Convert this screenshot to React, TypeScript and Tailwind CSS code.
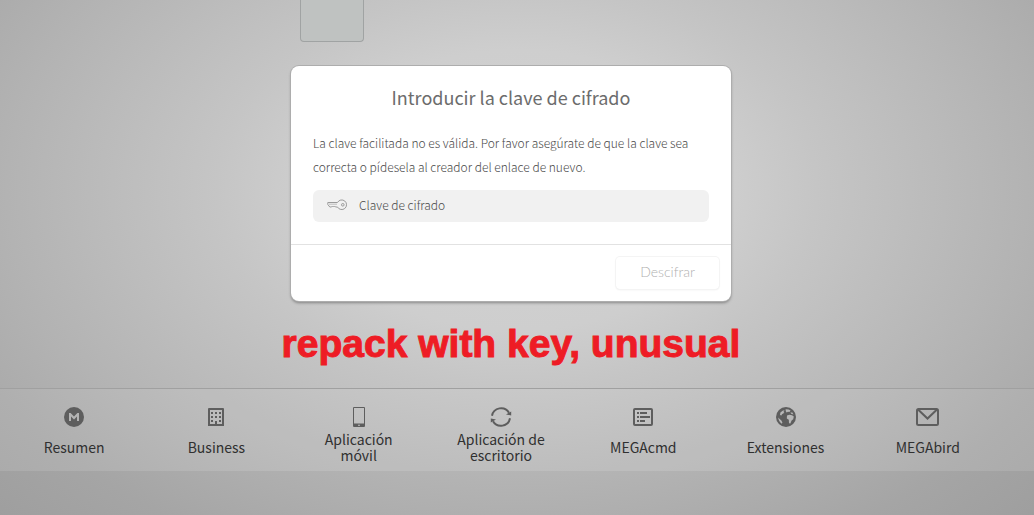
import type { ReactNode } from "react";

function Glyph({ w, h = 20, children }: { w: number; h?: number; children: ReactNode }) {
  return (
    <svg width={w} height={h} viewBox={`0 0 ${w} ${h}`} fill="none" aria-hidden="true">
      {children}
    </svg>
  );
}

const ink = "#5e5e5e";

const icons = {
  mega: (
    <Glyph w={20}>
      <circle cx="10" cy="10" r="10" fill={ink} />
      <path d="M5 14V6h1.6L10 9.6 13.4 6H15v8h-2V9.4l-3 3-3-3V14z" fill="#b4b4b4" />
    </Glyph>
  ),
  building: (
    <Glyph w={16}>
      <path
        fillRule="evenodd"
        fill={ink}
        d="M1 1h14a1 1 0 0 1 1 1v17H0V2a1 1 0 0 1 1-1zM2 3v14h5v-3h2v3h5V3zM3 5h2v2H3zm4 0h2v2H7zm4 0h2v2h-2zM3 9h2v2H3zm4 0h2v2H7zm4 0h2v2h-2zM3 13h2v2H3zm8 0h2v2h-2z"
      />
    </Glyph>
  ),
  phone: (
    <Glyph w={12}>
      <path
        fillRule="evenodd"
        fill={ink}
        d="M1 0h10a1 1 0 0 1 1 1v18a1 1 0 0 1-1 1H1a1 1 0 0 1-1-1V1a1 1 0 0 1 1-1zM1 1v15.5h10V1zM5 17.7v1h2v-1z"
      />
    </Glyph>
  ),
  sync: (
    <Glyph w={22}>
      <path d="M2 8.8A9.2 9.2 0 0 1 19 5.8M20 11.2A9.2 9.2 0 0 1 3 14.2" stroke={ink} strokeWidth="2" />
      <path d="M21.2 4.4V8.6L16 7.4zM.8 15.6V11.4L6 12.6z" fill={ink} />
    </Glyph>
  ),
  list: (
    <Glyph w={20}>
      <rect x="1" y="2" width="18" height="16" rx="1" stroke={ink} strokeWidth="2" />
      <path d="M4 6h2M7 6h7M4 10h2M7 10h10M4 14h2M7 14h5" stroke={ink} strokeWidth="2" />
    </Glyph>
  ),
  globe: (
    <Glyph w={20}>
      <circle cx="10" cy="10" r="10" fill={ink} />
      <path
        fill="#b8b8b8"
        d="M4.4 5.6 7 3.4l1.6.2L7.4 5l1 .8L6 7.2l-.6 1.4L4 8zM9.6 2.2 12.6 2.4 14.6 3.6 13.4 5 12 4.8 10.6 5.6 9.8 4.2zM11 8.6 13.4 7.8 16 8.2 17.8 9.4 17.2 12.2 15.6 13.4 14.4 16.4 13 16.2 12.8 12.8 10.8 11.6zM14.4 5.4 16.4 5.6 17.4 7.4 15.2 6.8zM2.2 10.6 3.4 11.8 5.4 13.4 6.4 15.4 5.8 16.8A8.4 8.4 0 0 1 2.2 10.6z"
      />
    </Glyph>
  ),
  mail: (
    <Glyph w={23}>
      <rect x="1" y="2" width="21" height="16" rx="1.5" stroke={ink} strokeWidth="2" />
      <path d="m2 2.5 9.5 9 9.5-9" stroke={ink} strokeWidth="2" />
    </Glyph>
  ),
};

const links = [
  { label: "Resumen", icon: icons.mega },
  { label: "Business", icon: icons.building },
  { label: "Aplicación móvil", icon: icons.phone },
  { label: "Aplicación de escritorio", icon: icons.sync },
  { label: "MEGAcmd", icon: icons.list },
  { label: "Extensiones", icon: icons.globe },
  { label: "MEGAbird", icon: icons.mail },
];

function KeyIcon() {
  return (
    <svg width="20" height="12" viewBox="0 0 20 12" fill="none" stroke="#9a9a9a" aria-hidden="true">
      <path d="M10.5 3.5A4.8 4.8 0 1 1 10.5 8H8.5L7.5 7 6.5 8 5.5 7 4.5 8H2.8L.8 5.5v-2z" strokeLinejoin="round" />
      <path d="M2 5.2h8" strokeWidth=".6" />
      <circle cx="15.8" cy="5.8" r="1.3" />
    </svg>
  );
}

function KeyDialog() {
  return (
    <form
      onSubmit={(e) => e.preventDefault()}
      className="w-full max-w-[440px] rounded-lg bg-white shadow-[0_0_0_1px_#adadad,0_2px_3px_rgba(0,0,0,0.35)]"
    >
      <div className="px-[22px] pt-[19px] pb-[22px]">
        <h1 className="text-center text-[18px] leading-6 text-[#6c6c6c]">Introducir la clave de cifrado</h1>
        <p className="mt-[22px] text-[12px] leading-6 font-light text-[#4a4a4a]">
          La clave facilitada no es válida. Por favor asegúrate de que la clave sea correcta o pídesela al creador del
          enlace de nuevo.
        </p>
        <label className="mt-[11px] flex h-8 items-center gap-3 rounded-md bg-[#f1f1f1] px-3.5 pb-0.5">
          <KeyIcon />
          <input
            type="text"
            aria-label="Clave de cifrado"
            placeholder="Clave de cifrado"
            className="min-w-0 flex-1 bg-transparent text-[12px] leading-6 font-light outline-none placeholder:text-[#4a4a4a]"
          />
        </label>
      </div>
      <div className="flex justify-end border-t border-[#e2e2e2] px-3 py-3">
        <button
          type="submit"
          disabled
          className="h-8 rounded px-6 pb-1 font-['Lato',sans-serif] text-[14px] font-light text-[#b0b0b0] shadow-[0_0_0_1px_#f4f4f4,0_1px_2px_rgba(0,0,0,0.08)]"
        >
          Descifrar
        </button>
      </div>
    </form>
  );
}

export default function App() {
  return (
    <div className="flex min-h-screen flex-col bg-[radial-gradient(600px_400px_at_50%_190px,#d3d3d3_0%,#cecece_35%,#c5c5c5_50%,#b3b3b3_85%,#ababab_100%,#a4a4a4_120%)] font-['Noto_Sans_CJK_SC',sans-serif]">
      <main className="flex flex-col items-center pr-3">
        <div className="w-full max-w-[422px]">
          <div className="h-[42px] w-16 rounded-b border border-t-0 border-[#a0a3a3] bg-[#bfc2c1]" />
        </div>
        <div className="mt-6 flex w-full justify-center">
          <KeyDialog />
        </div>
        <p className="mt-[22px] mb-[23px] text-center font-['Liberation_Sans',sans-serif] text-[39px] leading-[42px] font-bold text-[#ee1c25] [-webkit-text-stroke:1px_#ee1c25]">
          repack with key, unusual
        </p>
      </main>
      <nav className="border-t border-[#a0a0a0] bg-white/5 pr-[35px] pl-[3px]">
        <ul className="grid grid-cols-7 pt-[18px] pb-2">
          {links.map(({ label, icon }) => (
            <li key={label}>
              <a href="#" className="flex flex-col items-center gap-1 text-[#303030]">
                {icon}
                <span className="flex h-8 max-w-[100px] items-center text-center text-[14px] leading-4">{label}</span>
              </a>
            </li>
          ))}
        </ul>
      </nav>
      <footer className="flex-1 bg-black/3" />
    </div>
  );
}
